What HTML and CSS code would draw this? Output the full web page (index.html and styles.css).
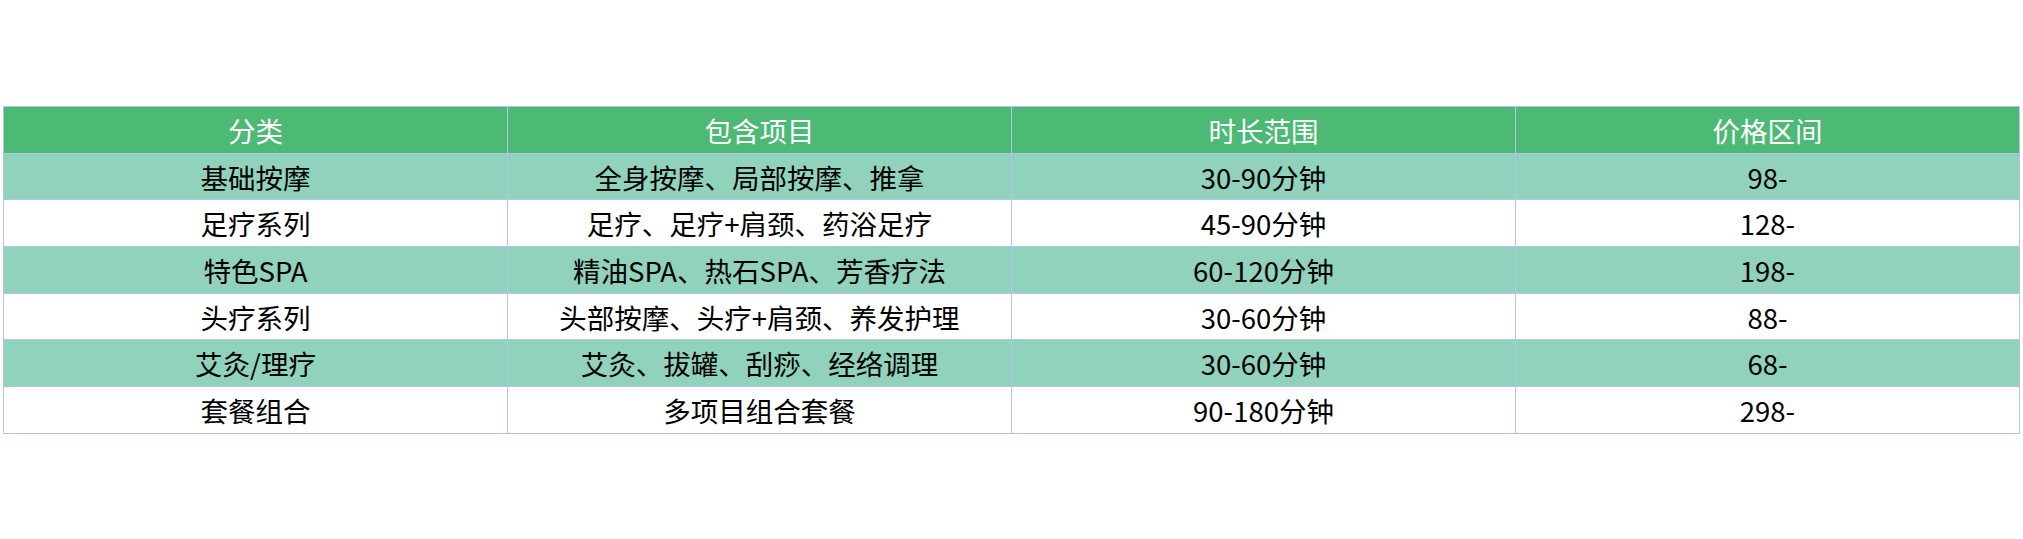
FILE: index.html
```html
<!DOCTYPE html>
<html lang="zh">
<head>
<meta charset="utf-8">
<link rel="stylesheet" href="styles.css">
</head>
<body>
<div class="wrap">
<table class="price">
<thead>
<tr><th>分类</th><th>包含项目</th><th>时长范围</th><th>价格区间</th></tr>
</thead>
<tbody>
<tr class="alt"><td>基础按摩</td><td>全身按摩、局部按摩、推拿</td><td>30-90分钟</td><td>98-</td></tr>
<tr><td>足疗系列</td><td>足疗、足疗+肩颈、药浴足疗</td><td>45-90分钟</td><td>128-</td></tr>
<tr class="alt"><td>特色SPA</td><td>精油SPA、热石SPA、芳香疗法</td><td>60-120分钟</td><td>198-</td></tr>
<tr><td>头疗系列</td><td>头部按摩、头疗+肩颈、养发护理</td><td>30-60分钟</td><td>88-</td></tr>
<tr class="alt"><td>艾灸/理疗</td><td>艾灸、拔罐、刮痧、经络调理</td><td>30-60分钟</td><td>68-</td></tr>
<tr><td>套餐组合</td><td>多项目组合套餐</td><td>90-180分钟</td><td>298-</td></tr>
</tbody>
</table>
</div>
</body>
</html>
```
FILE: styles.css
```css
html, body {
  margin: 0;
  padding: 0;
  background: #ffffff;
}
.wrap {
  padding: 106px 3px 0 3px;
}
.price {
  width: 2017px;
  border-collapse: collapse;
  table-layout: fixed;
  font-family: "Noto Sans CJK SC", "Noto Sans", sans-serif;
  font-size: 27.5px;
  color: #000;
}
.price th,
.price td {
  border: 1px solid #b4c6e7;
  height: 45.7px;
  padding: 0;
  text-align: center;
  vertical-align: middle;
  font-weight: 400;
  line-height: 30px;
}
.price th {
  background: #4cb975;
  color: #ffffff;
}
.price tr.alt td {
  background: #90d2bb;
}
```
